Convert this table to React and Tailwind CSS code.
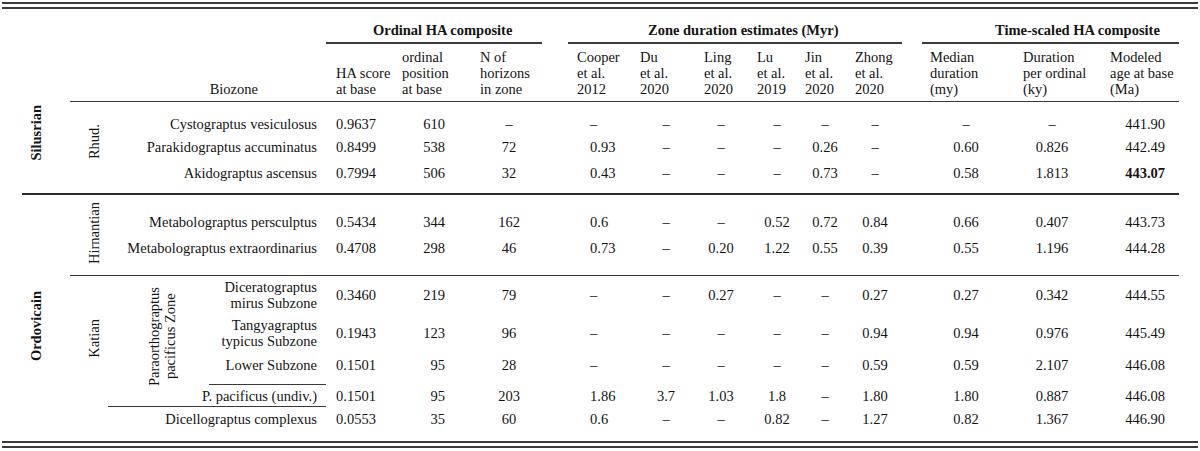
const D = "–";

// one entry per data column: width, header padding, value alignment
const cols = [
  { w: "w-[70px]", h: "pl-[10px]", v: "justify-start pl-[10px]" },
  { w: "w-[74px]", h: "pl-[6px]", v: "justify-end pr-[25px]" },
  { w: "w-[85px]", h: "pl-[10px]", v: "justify-center pr-[7px]" },
  { w: "w-[77px]", h: "pl-[22px]", v: "justify-start pl-[35px]" },
  { w: "w-[64px]", h: "pl-[8px]", v: "justify-center pl-[4px]" },
  { w: "w-[54px]", h: "pl-[8px]", v: "justify-center pr-[4px]" },
  { w: "w-[48px]", h: "pl-[7px]", v: "justify-center pl-[6px]" },
  { w: "w-[50px]", h: "pl-[7px]", v: "justify-center pl-[4px]" },
  { w: "w-[64px]", h: "pl-[7px]", v: "justify-center pr-[10px]" },
  { w: "w-[98px]", h: "pl-[18px]", v: "justify-center pl-[10px]" },
  { w: "w-[90px]", h: "pl-[13px]", v: "justify-center pr-[6px]" },
  { w: "w-[79px]", h: "pl-[10px]", v: "justify-end pr-[14px]" },
];

const heads = [
  ["HA score", "at base"],
  ["ordinal", "position", "at base"],
  ["N of", "horizons", "in zone"],
  ["Cooper", "et al.", "2012"],
  ["Du", "et al.", "2020"],
  ["Ling", "et al.", "2020"],
  ["Lu", "et al.", "2019"],
  ["Jin", "et al.", "2020"],
  ["Zhong", "et al.", "2020"],
  ["Median", "duration", "(my)"],
  ["Duration", "per ordinal", "(ky)"],
  ["Modeled", "age at base", "(Ma)"],
];

const Row = ({ name, vals, nameW, h, pad = "", line = "", bold }) => (
  <div className={`flex ${h}`}>
    <div className={`flex shrink-0 items-center justify-end pr-[9px] text-right ${nameW} ${pad} ${line}`}>
      <div>{name}</div>
    </div>
    {vals.map((v, i) => (
      <div key={i} className={`flex shrink-0 items-center ${cols[i].w} ${cols[i].v} ${pad}`}>
        <span className={bold && i === 11 ? "font-bold" : ""}>{v}</span>
      </div>
    ))}
  </div>
);

const Vert = ({ children, className = "" }) => (
  <div className={`[writing-mode:vertical-rl] rotate-180 text-center ${className}`}>{children}</div>
);

export default function App() {
  return (
    <div className="w-[1200px] h-[451px] bg-white px-[2px] pt-[2px] text-[14.5px] leading-[16px] text-[#141414] font-['Liberation_Serif','Times_New_Roman',serif]">
      <div className="h-[2px] bg-[#3a3a3a]" />
      <div className="mt-[3px] h-[2px] bg-[#3a3a3a]" />

      <div className="pl-[20px] pr-[19px]">
        {/* group headers */}
        <div className="flex h-[35px]">
          <div className="w-[304px] shrink-0" />
          <div className="flex w-[229px] shrink-0 flex-col justify-end">
            <div className="mb-[4px] pl-[47px] font-bold">Ordinal HA composite</div>
            <div className="mr-[13px] h-[2px] bg-[#3a3a3a]" />
          </div>
          <div className="flex w-[357px] shrink-0 flex-col justify-end">
            <div className="mb-[4px] pl-[93px] font-bold">Zone duration estimates (Myr)</div>
            <div className="ml-[13px] mr-[10px] h-[2px] bg-[#3a3a3a]" />
          </div>
          <div className="flex w-[267px] shrink-0 flex-col justify-end">
            <div className="mb-[4px] pl-[83px] font-bold">Time-scaled HA composite</div>
            <div className="ml-[10px] h-[2px] bg-[#3a3a3a]" />
          </div>
        </div>

        {/* column headers */}
        <div className="flex h-[57px] items-end pb-[4px]">
          <div className="flex w-[304px] shrink-0 justify-end pr-[68px]">Biozone</div>
          {heads.map((lines, i) => (
            <div key={i} className={`shrink-0 ${cols[i].w} ${cols[i].h}`}>
              {lines.map((l) => (
                <div key={l} className="whitespace-nowrap">{l}</div>
              ))}
            </div>
          ))}
        </div>

        {/* Silurian */}
        <div className="flex">
          <div className="flex w-[48px] shrink-0 items-center justify-center pr-[20px] pb-[28px]">
            <Vert className="font-bold">Silusrian</Vert>
          </div>
          <div className="flex flex-1 border-t border-[#3a3a3a]">
            <div className="flex w-[38px] shrink-0 items-center justify-center pl-[10px] pb-[12px]">
              <Vert>Rhud.</Vert>
            </div>
            <div className="flex flex-col pt-[10px] pb-[6px]">
              <Row h="h-[23px]" nameW="w-[218px]" name="Cystograptus vesiculosus" vals={["0.9637", "610", D, D, D, D, D, D, D, D, D, "441.90"]} />
              <Row h="h-[23px]" nameW="w-[218px]" name="Parakidograptus accuminatus" vals={["0.8499", "538", "72", "0.93", D, D, D, "0.26", D, "0.60", "0.826", "442.49"]} />
              <Row h="h-[29px]" nameW="w-[218px]" name="Akidograptus ascensus" bold vals={["0.7994", "506", "32", "0.43", D, D, D, "0.73", D, "0.58", "1.813", "443.07"]} />
            </div>
          </div>
        </div>

        {/* Ordovician */}
        <div className="flex border-t-2 border-[#2a2a2a]">
          <div className="flex w-[48px] shrink-0 items-center justify-center pr-[20px] pt-[16px]">
            <Vert className="font-bold">Ordovicain</Vert>
          </div>
          <div className="flex flex-1 flex-col">
            <div className="flex">
              <div className="flex w-[38px] shrink-0 items-center justify-center pl-[10px] pb-[4px]">
                <Vert>Hirnantian</Vert>
              </div>
              <div className="flex flex-col pt-[14px] pb-[14px]">
                <Row h="h-[26px]" nameW="w-[218px]" name="Metabolograptus persculptus" vals={["0.5434", "344", "162", "0.6", D, D, "0.52", "0.72", "0.84", "0.66", "0.407", "443.73"]} />
                <Row h="h-[26px]" nameW="w-[218px]" name="Metabolograptus extraordinarius" vals={["0.4708", "298", "46", "0.73", D, "0.20", "1.22", "0.55", "0.39", "0.55", "1.196", "444.28"]} />
              </div>
            </div>

            <div className="flex border-t border-[#3a3a3a]">
              <div className="flex w-[38px] shrink-0 items-center justify-center pl-[10px] pb-[40px]">
                <Vert>Katian</Vert>
              </div>
              <div className="flex flex-col pb-[10px]">
                <div className="flex">
                  <div className="flex w-[101px] shrink-0 items-center justify-center border-b border-[#3a3a3a] pl-[7px] pb-[8px]">
                    <Vert>
                      Paraorthograptus
                      <br />
                      pacificus Zone
                    </Vert>
                  </div>
                  <div className="flex flex-col">
                    <Row h="h-[38px]" nameW="w-[117px]" name={<>Diceratograptus<br />mirus Subzone</>} vals={["0.3460", "219", "79", D, D, "0.27", D, D, "0.27", "0.27", "0.342", "444.55"]} />
                    <Row h="h-[38px]" nameW="w-[117px]" name={<>Tangyagraptus<br />typicus Subzone</>} vals={["0.1943", "123", "96", D, D, D, D, D, "0.94", "0.94", "0.976", "445.49"]} />
                    <Row h="h-[33px]" pad="pb-[7px]" line="border-b border-[#3a3a3a]" nameW="w-[117px]" name="Lower Subzone" vals={["0.1501", "95", "28", D, D, D, D, D, "0.59", "0.59", "2.107", "446.08"]} />
                    <Row h="h-[22px]" line="border-b border-[#3a3a3a]" nameW="w-[117px]" name={<span className="whitespace-nowrap">P. pacificus (undiv.)</span>} vals={["0.1501", "95", "203", "1.86", "3.7", "1.03", "1.8", D, "1.80", "1.80", "0.887", "446.08"]} />
                  </div>
                </div>
                <Row h="h-[24px]" nameW="w-[218px]" name="Dicellograptus complexus" vals={["0.0553", "35", "60", "0.6", D, D, "0.82", D, "1.27", "0.82", "1.367", "446.90"]} />
              </div>
            </div>
          </div>
        </div>
      </div>

      <div className="h-[2px] bg-[#3a3a3a]" />
      <div className="mt-[3px] h-[2px] bg-[#3a3a3a]" />
    </div>
  );
}
